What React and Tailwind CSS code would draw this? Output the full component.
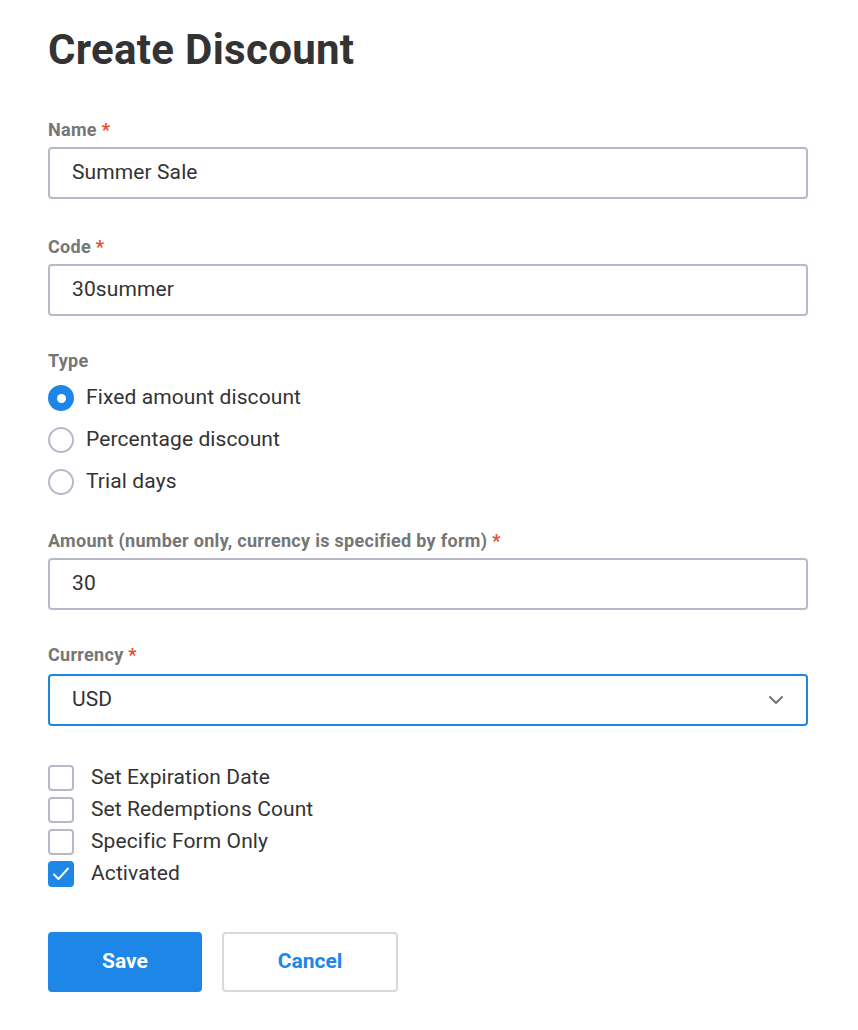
import React from "react";

const font = { fontFamily: "Roboto, 'Liberation Sans', sans-serif" };

function Label({ children, required }) {
  return (
    <div className="h-6 mb-[5px] text-[18px] leading-6 font-bold tracking-[0.3px] text-[#767676]">
      {children}
      {required && <span className="text-[#ec4a2c]"> *</span>}
    </div>
  );
}

function TextInput({ value }) {
  return (
    <div className="h-[52px] w-[760px] rounded-[4px] border-2 border-[#b9b8ca] flex items-center pl-[22px] text-[21px] tracking-[0.1px] text-[#333333]">
      {value}
    </div>
  );
}

function Radio({ checked, label }) {
  return (
    <div className="h-[42px] flex items-center">
      {checked ? (
        <span className="w-[26px] h-[26px] rounded-full bg-[#1d86e6] flex items-center justify-center">
          <span className="w-[9px] h-[9px] rounded-full bg-white" />
        </span>
      ) : (
        <span className="w-[26px] h-[26px] rounded-full border-2 border-[#b9b8ca] bg-white" />
      )}
      <span className="ml-3 text-[21px] tracking-[0.1px] text-[#333333]">{label}</span>
    </div>
  );
}

function Checkbox({ checked, label }) {
  return (
    <div className="h-8 flex items-center">
      {checked ? (
        <span className="w-[26px] h-[26px] rounded-[4px] bg-[#1d86e6] flex items-center justify-center">
          <svg width="22" height="22" viewBox="0 0 22 22" fill="none">
            <path d="M4 11.5 L8.5 16 L18 5.5" stroke="white" strokeWidth="2" strokeLinecap="round" strokeLinejoin="round" />
          </svg>
        </span>
      ) : (
        <span className="w-[26px] h-[26px] rounded-[4px] border-2 border-[#b9b8ca] bg-white" />
      )}
      <span className="ml-[17px] text-[21px] tracking-[0.1px] text-[#333333]">{label}</span>
    </div>
  );
}

export default function App() {
  return (
    <div className="min-h-[1030px] bg-white pl-12 pt-[26px]" style={font}>
      <h1 className="text-[42px] leading-[48px] font-bold tracking-[0.3px] text-[#333333]">Create Discount</h1>

      <div className="mt-[44px]">
        <Label required>Name</Label>
        <TextInput value="Summer Sale" />
      </div>

      <div className="mt-9">
        <Label required>Code</Label>
        <TextInput value="30summer" />
      </div>

      <div className="mt-[33px]">
        <div className="h-6 text-[18px] leading-6 font-bold tracking-[0.3px] text-[#767676]">Type</div>
        <div className="mt-[4px]">
          <Radio checked label="Fixed amount discount" />
          <Radio label="Percentage discount" />
          <Radio label="Trial days" />
        </div>
      </div>

      <div className="mt-[26px]">
        <Label required>Amount (number only, currency is specified by form)</Label>
        <TextInput value="30" />
      </div>

      <div className="mt-[33px]">
        <div className="h-6 mb-[7px] text-[18px] leading-6 font-bold tracking-[0.3px] text-[#767676]">
          Currency<span className="text-[#ec4a2c]"> *</span>
        </div>
        <div className="h-[52px] w-[760px] rounded-[4px] border-2 border-[#1d86e6] flex items-center justify-between pl-[22px] pr-[22px] text-[21px] tracking-[0.1px] text-[#333333]">
          <span>USD</span>
          <svg width="16" height="10" viewBox="0 0 16 10" fill="none">
            <path d="M2 2 L8 8 L14 2" stroke="#757575" strokeWidth="2" strokeLinecap="round" strokeLinejoin="round" />
          </svg>
        </div>
      </div>

      <div className="mt-[36px]">
        <Checkbox label="Set Expiration Date" />
        <Checkbox label="Set Redemptions Count" />
        <Checkbox label="Specific Form Only" />
        <Checkbox checked label="Activated" />
      </div>

      <div className="mt-[42px] flex gap-5">
        <button className="w-[154px] h-[60px] rounded-[4px] bg-[#1d86e6] text-white text-[21px] font-bold">
          Save
        </button>
        <button className="w-[176px] h-[60px] rounded-[4px] border-2 border-[#d9d9de] bg-white text-[#1d86e6] text-[21px] font-bold">
          Cancel
        </button>
      </div>
    </div>
  );
}
